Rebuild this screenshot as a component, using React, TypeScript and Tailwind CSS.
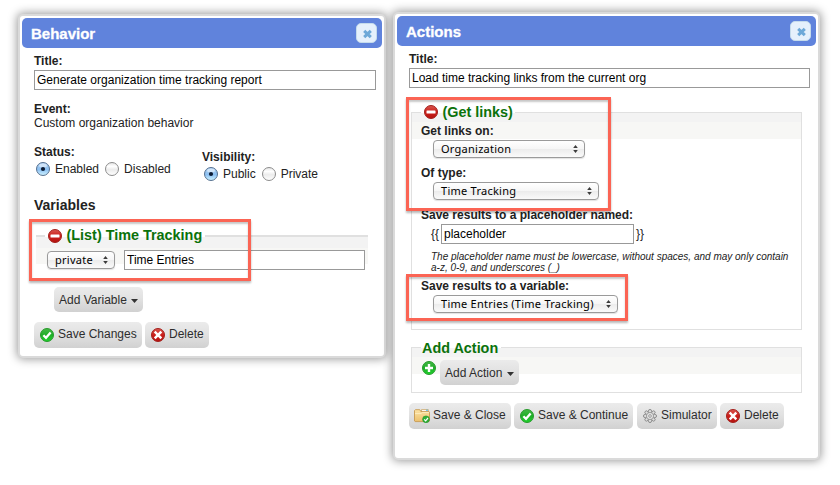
import type { ReactNode } from "react";

const inputCls =
  "block box-border h-5 border border-[#999] bg-white px-[2px] text-[12px] leading-[18px] text-black outline-none";

function CloseButton() {
  return (
    <button className="flex h-5 w-[21px] items-center justify-center rounded-[5px] border border-[#c5dbec] bg-[#e5f0fc]">
      <svg width="11" height="10" viewBox="0 0 11 10" className="ml-[1px] mt-px">
        <path d="M2.2 1.8 8.8 8.2M8.8 1.8 2.2 8.2" stroke="#6da8d8" strokeWidth="3" strokeLinecap="butt" />
      </svg>
    </button>
  );
}

function Header({ title }: { title: string }) {
  return (
    <div className="flex h-[30px] items-center justify-between rounded-[5px] bg-[#6083dc] pl-[9px] pr-[5px]">
      <h2 className="pt-px text-[15px] font-bold leading-[18px] text-white [-webkit-text-stroke:0.3px_white]">{title}</h2>
      <CloseButton />
    </div>
  );
}

function Label({ children }: { children: ReactNode }) {
  return <div className="h-[14px] font-bold leading-[14px]">{children}</div>;
}

function Radio({ checked = false, name }: { checked?: boolean; name: string }) {
  const id = checked ? `${name}-on` : `${name}-off`;
  return (
    <svg width="14" height="14" viewBox="0 0 14 14" className="shrink-0">
      <defs>
        <linearGradient id={id} x1="0" y1="0" x2="0" y2="1">
          <stop offset="0" stopColor={checked ? "#a9cdf3" : "#e4e4e4"} />
          <stop offset="0.3" stopColor={checked ? "#9cc7f0" : "#ffffff"} />
          <stop offset="0.55" stopColor={checked ? "#8cc0f2" : "#ececec"} />
          <stop offset="1" stopColor={checked ? "#d0f4ff" : "#ffffff"} />
        </linearGradient>
      </defs>
      <circle cx="7" cy="7" r="6.5" fill={`url(#${id})`} stroke={checked ? "#56708f" : "#8c8c8c"} strokeWidth="1" />
      {checked && <ellipse cx="7" cy="3.6" rx="4" ry="2" fill="#fff" opacity="0.5" />}
      {checked && <circle cx="7" cy="7" r="2.1" fill="#0b1b33" />}
    </svg>
  );
}

function RadioPair({ name, on, off }: { name: string; on: string; off: string }) {
  return (
    <div className="mt-[3px] flex h-[14px] items-center pl-[2px] leading-[14px]">
      <Radio checked name={name} />
      <span className="ml-[5px]">{on}</span>
      <span className="ml-[6px] flex">
        <Radio name={name} />
      </span>
      <span className="ml-[5px]">{off}</span>
    </div>
  );
}

function Select({ text, width }: { text: string; width: string }) {
  return (
    <button
      className={`flex h-[18px] items-center justify-between rounded-[4px] border border-[#9a9a9a] bg-[linear-gradient(#fff_0%,#f6f6f6_48%,#ececec_52%,#fafafa_100%)] pl-[7px] pr-[6px] text-left shadow-[0_1px_1px_rgba(0,0,0,0.12)] ${width}`}
    >
      <span className="whitespace-nowrap font-['Noto_Sans',sans-serif] text-[11px] leading-[16px] tracking-[0.26px] text-black">{text}</span>
      <svg width="5" height="8" viewBox="0 0 5 8">
        <path d="M2.5 0 4.8 3H.2zM2.5 8 4.8 5H.2z" fill="#3c3c3c" />
      </svg>
    </button>
  );
}

function DiscDefs() {
  return (
    <svg width="0" height="0" className="h-0 w-0">
      <defs>
        <linearGradient id="red" x1="0" y1="0" x2="0" y2="1">
          <stop offset="0" stopColor="#d9574f" />
          <stop offset="0.5" stopColor="#cb1f1a" />
          <stop offset="1" stopColor="#b51310" />
        </linearGradient>
        <linearGradient id="green" x1="0" y1="0" x2="0" y2="1">
          <stop offset="0" stopColor="#45b845" />
          <stop offset="0.5" stopColor="#1fae28" />
          <stop offset="1" stopColor="#1fd22d" />
        </linearGradient>
        <linearGradient id="folder" x1="0" y1="0" x2="0" y2="1">
          <stop offset="0" stopColor="#fce3a4" />
          <stop offset="1" stopColor="#ecc06c" />
        </linearGradient>
      </defs>
    </svg>
  );
}

function Minus() {
  return (
    <svg width="14" height="14" viewBox="0 0 14 14" className="shrink-0">
      <circle cx="7" cy="7" r="6.5" fill="url(#red)" stroke="#a3211d" />
      <rect x="2.5" y="5.5" width="9" height="3" rx="0.6" fill="#fff" />
    </svg>
  );
}

function Cross() {
  return (
    <svg width="14" height="14" viewBox="0 0 14 14" className="shrink-0">
      <circle cx="7" cy="7" r="6.5" fill="url(#red)" stroke="#a3211d" />
      <path d="M4.6 4.6 9.4 9.4M9.4 4.6 4.6 9.4" stroke="#fff" strokeWidth="2.5" strokeLinecap="square" />
    </svg>
  );
}

function Check() {
  return (
    <svg width="14" height="14" viewBox="0 0 14 14" className="shrink-0">
      <circle cx="7" cy="7" r="6.5" fill="url(#green)" stroke="#279a2c" />
      <path d="M3.4 7.2 6 9.8 10.6 4.6" stroke="#fff" strokeWidth="2.3" fill="none" />
    </svg>
  );
}

function Plus() {
  return (
    <svg width="14" height="14" viewBox="0 0 14 14" className="shrink-0">
      <circle cx="7" cy="7" r="6.5" fill="url(#green)" stroke="#279a2c" />
      <path d="M7 3v8M3 7h8" stroke="#fff" strokeWidth="2.4" />
    </svg>
  );
}

function Folder() {
  return (
    <svg width="16" height="14" viewBox="0 0 16 14" className="shrink-0">
      <path d="M7.5 2.5V.6h6.8v3" fill="#fff" stroke="#c9a563" strokeWidth="0.8" />
      <path d="M12 1.2h2" stroke="#4bb3e8" strokeWidth="1" />
      <path d="M.5 12V1.6L1.4.7h4.4l1 1.8h8.2l.5.6V12l-.6.6H1.1z" fill="url(#folder)" stroke="#c79a50" strokeWidth="0.9" />
      <path d="M1 4.6h6.2l1.2-1.2H15" stroke="#fff0c8" strokeWidth="0.8" fill="none" />
      <circle cx="12" cy="10.3" r="3.4" fill="#2db135" stroke="#23902a" strokeWidth="0.6" />
      <path d="M10.2 10.4 11.6 11.8 14 9" stroke="#fff" strokeWidth="1.2" fill="none" />
    </svg>
  );
}

const petals = [0, 45, 90, 135, 180, 225, 270, 315];

function Gear() {
  return (
    <svg width="14" height="14" viewBox="0 0 14 14" className="shrink-0">
      {petals.map((a) => (
        <ellipse key={a} cx="7" cy="2.4" rx="1.6" ry="2" fill="#dedede" stroke="#858585" strokeWidth="0.9" transform={`rotate(${a} 7 7)`} />
      ))}
      <circle cx="7" cy="7" r="3.6" fill="#e2e2e2" stroke="#999" strokeWidth="0.9" />
      <circle cx="7" cy="7" r="1.3" fill="#fff" stroke="#808080" strokeWidth="0.8" />
    </svg>
  );
}

const btnCls =
  "flex shrink-0 items-start whitespace-nowrap rounded-[5px] bg-[linear-gradient(#ebebeb,#e2e2e2_45%,#d1d1d1)] text-[12px] leading-[14px] text-[#2d2d2d]";

function IconButton({
  icon,
  text,
  width,
  pad = "pl-[6px]",
  gap = "ml-[4px]",
}: {
  icon: ReactNode;
  text: string;
  width: string;
  pad?: string;
  gap?: string;
}) {
  return (
    <button className={`${btnCls} h-[26px] pt-[5px] ${pad} ${width}`}>
      <span className="mt-px">{icon}</span>
      <span className={gap}>{text}</span>
    </button>
  );
}

function MenuButton({ text, width }: { text: string; width: string }) {
  return (
    <button className={`${btnCls} h-[25px] justify-between pl-[5px] pr-[5px] pt-[6px] ${width}`}>
      <span>{text}</span>
      <svg width="7" height="4" viewBox="0 0 7 4" className="mt-[6px]">
        <path d="M0 0h7L3.5 4z" fill="#333" />
      </svg>
    </button>
  );
}

const panelCls =
  "shrink-0 rounded-[5px] border-2 border-[#dadada] bg-white p-[2px] shadow-[0_0_10px_1px_rgba(0,0,0,0.4)]";

const legendCls = "flex h-[18px] text-[14.4px] font-bold text-[#0b720b] whitespace-nowrap";

function BehaviorPanel() {
  return (
    <section className={`${panelCls} mt-[14px] h-[344px] w-[368px]`}>
      <Header title="Behavior" />
      <div className="pl-3 pt-[6px]">
        <Label>Title:</Label>
        <input className={`${inputCls} mt-[2px] w-[342px]`} defaultValue="Generate organization time tracking report" />
        <div className="mt-3">
          <Label>Event:</Label>
          <div className="leading-[14px]">Custom organization behavior</div>
        </div>
        <div className="mt-[15px] flex h-[52px]">
          <div className="w-[168px]">
            <Label>Status:</Label>
            <RadioPair name="status" on="Enabled" off="Disabled" />
          </div>
          <div className="pt-[5px]">
            <Label>Visibility:</Label>
            <RadioPair name="visibility" on="Public" off="Private" />
          </div>
        </div>
        <h3 className="h-4 text-[14px] font-bold leading-4">Variables</h3>
        <fieldset className="ml-[2px] mt-[14px] h-[50px] w-[332px] border-t-2 border-[#e0e0e0] bg-[linear-gradient(#f3f3f3_0_11px,#f7f7f5_11px_27px,#fff_27px)] pl-[9px]">
          <legend className={`${legendCls} w-[160px] items-start pl-[3px] leading-4`}>
            <span className="mt-[2px]">
              <Minus />
            </span>
            <span className="ml-[4.5px]">(List) Time Tracking</span>
          </legend>
          <div className="flex items-center pl-[2px] pt-[5px]">
            <Select text="private" width="w-[68px]" />
            <input className={`${inputCls} ml-[9px] w-[241px]`} defaultValue="Time Entries" />
          </div>
        </fieldset>
        <div className="ml-5 mt-[10px]">
          <MenuButton text="Add Variable" width="w-[89px]" />
        </div>
        <div className="mt-[10px] flex gap-[3px]">
          <IconButton icon={<Check />} text="Save Changes" width="w-[108px]" />
          <IconButton icon={<Cross />} text="Delete" width="w-16" />
        </div>
      </div>
    </section>
  );
}

function ActionsPanel() {
  return (
    <section className={`${panelCls} ml-[7px] mt-3 h-[448px] w-[427px]`}>
      <Header title="Actions" />
      <div className="pl-3 pt-[6px]">
        <Label>Title:</Label>
        <input className={`${inputCls} mt-[2px] w-[401px]`} defaultValue="Load time tracking links from the current org" />
        <fieldset className="ml-[2px] mt-[15px] h-[227px] w-[391px] border border-[#e0e0e0] bg-[linear-gradient(#f3f3f3_0_9px,#f7f7f5_9px_26px,#fff_26px)] pl-[9px]">
          <legend className={`${legendCls} w-[94px] items-center pl-[3px] leading-[18px]`}>
            <Minus />
            <span className="ml-[4.5px]">(Get links)</span>
          </legend>
          <div className="pt-[3px]">
            <Label>Get links on:</Label>
            <div className="ml-3 mt-[2px]">
              <Select text="Organization" width="w-[152px]" />
            </div>
          </div>
          <div className="mt-2">
            <Label>Of type:</Label>
            <div className="ml-3 mt-[2px]">
              <Select text="Time Tracking" width="w-[166px]" />
            </div>
          </div>
          <div className="mt-2">
            <Label>Save results to a placeholder named:</Label>
            <div className="ml-[10px] mt-[2px] flex items-center leading-[14px]">
              <span className="w-[10px]">{"{{"}</span>
              <input className={`${inputCls} w-[193px]`} defaultValue="placeholder" />
              <span className="ml-[2px]">{"}}"}</span>
            </div>
            <p className="ml-[10px] mt-[7px] whitespace-nowrap text-[10px] italic leading-[11px]">
              The placeholder name must be lowercase, without spaces, and may only contain
              <br />
              a-z, 0-9, and underscores (_)
            </p>
          </div>
          <div className="mt-[6px]">
            <Label>Save results to a variable:</Label>
            <div className="ml-3 mt-[2px]">
              <Select text="Time Entries (Time Tracking)" width="w-[185px]" />
            </div>
          </div>
        </fieldset>
        <fieldset className="ml-[2px] mt-2 h-[55px] w-[391px] border border-[#e0e0e0] bg-[linear-gradient(#f3f3f3_0_9px,#f7f7f5_9px_26px,#fff_26px)] pl-[9px]">
          <legend className={`${legendCls} w-20 pl-[1px] leading-[20px]`}>Add Action</legend>
          <div className="flex items-start pl-px pt-1">
            <span className="mt-px">
              <Plus />
            </span>
            <span className="ml-1">
              <MenuButton text="Add Action" width="w-[79px]" />
            </span>
          </div>
        </fieldset>
        <div className="mt-[10px] flex">
          <IconButton icon={<Folder />} text="Save & Close" width="w-[102px]" pad="pl-[5px]" gap="ml-[3px]" />
          <span className="w-[3px]" />
          <IconButton icon={<Check />} text="Save & Continue" width="w-[119px]" />
          <span className="w-1" />
          <IconButton icon={<Gear />} text="Simulator" width="w-20" />
          <span className="w-[3px]" />
          <IconButton icon={<Cross />} text="Delete" width="w-16" />
        </div>
      </div>
    </section>
  );
}

function Highlight({ place }: { place: string }) {
  return (
    <div
      className={`pointer-events-none absolute border-[3px] border-[#fb6454] shadow-[0_2px_2px_rgba(0,0,0,0.28),inset_0_2px_2px_rgba(0,0,0,0.22)] ${place}`}
    />
  );
}

export default function App() {
  return (
    <main className="relative h-[485px] w-[840px] overflow-hidden bg-white font-['Liberation_Sans',Arial,sans-serif] text-[12px] text-[#222]">
      <div className="flex items-start pl-[18px]">
        <BehaviorPanel />
        <ActionsPanel />
      </div>
      <Highlight place="left-[29px] top-[219px] h-[62px] w-[222px]" />
      <Highlight place="left-[406px] top-[97px] h-[114px] w-[205px]" />
      <Highlight place="left-[406px] top-[274px] h-[47px] w-[222px]" />
      <DiscDefs />
    </main>
  );
}
